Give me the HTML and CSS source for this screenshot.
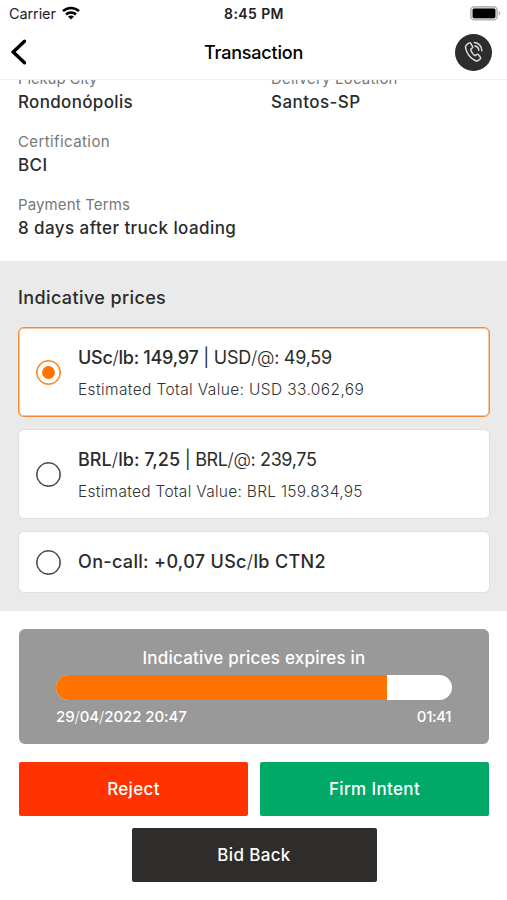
FILE: index.html
```html
<!DOCTYPE html>
<html lang="en">
<head>
  <meta charset="UTF-8" />
  <meta name="viewport" content="width=device-width, initial-scale=1.0"/>
  <title>Transaction</title>
  <link rel="stylesheet" href="styles.css">
</head>
<body>
  <div class="status-bar">
    <div class="carrier">
      <span>Carrier</span>
      <svg width="18" height="14" viewBox="0 0 18 14" fill="none" stroke="#000" stroke-width="2.5">
        <path d="M1 5.2C5.4.9 12.6.9 17 5.2"/>
        <path d="M4 8.5c2.8-2.7 7.2-2.7 10 0"/>
        <path d="M9 13.4L6 10.5c1.7-1.5 4.3-1.5 6 0z" fill="#000" stroke="none"/>
      </svg>
    </div>
    <span class="clock">8:45 PM</span>
    <svg class="battery" width="31" height="15" viewBox="0 0 31 15">
      <rect x=".75" y=".75" width="26.5" height="13" rx="3.6" fill="#ddd" stroke="#b5b5b5" stroke-width="1.5"/>
      <rect x="2.6" y="2.4" width="22.8" height="9.8" rx="1.8" fill="#000"/>
      <path d="M28.8 5v4.6c1.8-.7 1.8-3.9 0-4.6z" fill="#aaa"/>
    </svg>
  </div>

  <div class="header">
    <button class="back" aria-label="Back">
      <svg width="18" height="28" viewBox="0 0 18 28" fill="none" stroke="#000" stroke-width="3.4" stroke-linecap="round" stroke-linejoin="miter">
        <path d="M14.5 3.2L3.2 14l11.3 10.8"/>
      </svg>
    </button>
    <h1>Transaction</h1>
    <button class="call" aria-label="Call">
      <svg width="20" height="22" viewBox="0 0 20 22" fill="none" stroke="#ddd" stroke-width="1.5" stroke-linecap="round" stroke-linejoin="round">
        <path d="M3.1 3.3L5 2c.6-.4 1.3-.2 1.7.4L8.5 5.3c.4.6.2 1.3-.3 1.7l-1 .8c-.5.4-.6.9-.4 1.5.8 2 1.9 3.6 3.4 4.9.5.4 1.1.4 1.6 0l.9-.7c.6-.4 1.3-.3 1.7.2l2 2.6c.4.6.3 1.3-.2 1.7l-1.5 1.2c-1 .8-2.3.9-3.5.3C6.3 17.1 2.9 12.6 1.6 7.1 1.3 5.6 1.9 4.2 3.1 3.3z"/>
        <path d="M10.3 1.400c4.200.3 7.500 3.800 7.600 8.300"/>
        <path d="M10.900 5c2.300.4 3.700 2 3.900 4.300"/>
      </svg>
    </button>
  </div>

  <div class="content">
    <div class="details">
      <div class="field">
        <div class="label pickup">Pickup City</div>
        <div class="value city">Rondonópolis</div>
      </div>
      <div class="field">
        <div class="label">Delivery Location</div>
        <div class="value">Santos-SP</div>
      </div>
      <div class="field wide">
        <div class="label cert">Certification</div>
        <div class="value">BCI</div>
      </div>
      <div class="field wide">
        <div class="label terms">Payment Terms</div>
        <div class="value">8 days after truck loading</div>
      </div>
    </div>

    <div class="prices">
      <h2>Indicative prices</h2>
      <div class="option selected">
        <span class="radio"></span>
        <div class="option-text">
          <div class="price"><b>USc<i>/</i>lb: 149,97</b> | USD<i>/@</i>: 49,59</div>
          <div class="total">Estimated Total Value: USD 33.062,69</div>
        </div>
      </div>
      <div class="option">
        <span class="radio"></span>
        <div class="option-text">
          <div class="price brl"><b>BRL<i>/</i>lb: 7,25</b> | BRL<i>/@</i>: 239,75</div>
          <div class="total total-brl">Estimated Total Value: BRL 159.834,95</div>
        </div>
      </div>
      <div class="option short">
        <span class="radio"></span>
        <div class="price oncall"><b>On-call: +0,07 USc<i>/</i>lb CTN2</b></div>
      </div>
    </div>

    <div class="expires">
      <div class="expires-title">Indicative prices expires in</div>
      <div class="bar"><div class="bar-fill" style="width: 83.6%"></div></div>
      <div class="times">
        <span>29<i>/</i>04<i>/</i>2022 20:47</span>
        <span class="left">01:41</span>
      </div>
    </div>

    <div class="actions">
      <button class="btn reject">Reject</button>
      <button class="btn firm">Firm Intent</button>
      <button class="btn bid">Bid Back</button>
    </div>
  </div>
</body>
</html>
```
FILE: styles.css
```css
:root {
  --orange: #ff7300;
  --dark: #2e2d2b;
  --text: #2b2b2b;
  --muted: #777;
  --grey: #eaeaea;
}

* {
  box-sizing: border-box;
  margin: 0;
  padding: 0;
}

body {
  font-family: Inter, "Liberation Sans", sans-serif;
  background: #fff;
  color: var(--text);
  height: 900px;
  overflow: hidden;
  display: flex;
  flex-direction: column;
}

button {
  border: none;
  background: none;
  font-family: inherit;
}

i {
  font-style: normal;
  font-weight: 300;
}

/* Status bar */
.status-bar {
  height: 27px;
  padding: 0 6px 0 9px;
  display: grid;
  grid-template-columns: 1fr auto 1fr;
  align-items: center;
  font-size: 14.5px;
  color: #222;
}

.carrier {
  display: flex;
  align-items: center;
  gap: 6px;
  letter-spacing: -0.1px;
}

.carrier svg {
  margin-top: -2px;
}

.clock {
  font-weight: 600;
  font-size: 14px;
  letter-spacing: 0.4px;
  padding-right: 2px;
}

.battery {
  justify-self: end;
}

/* Header */
.header {
  height: 53px;
  padding: 0 15px 2px 10px;
  display: grid;
  grid-template-columns: 1fr auto 1fr;
  align-items: center;
  border-bottom: 1px solid #f0f0f0;
}

.back {
  justify-self: start;
  height: 28px;
}

h1 {
  font-size: 18px;
  font-weight: 500;
  letter-spacing: -0.2px;
  color: #000;
  padding-left: 5px;
}

.call {
  justify-self: end;
  width: 37px;
  height: 37px;
  border-radius: 50%;
  background: var(--dark);
  display: flex;
  align-items: center;
  justify-content: center;
}

/* Scrolled content */
.content {
  flex: 1;
  overflow: hidden;
}

.details {
  margin-top: -13px;
  padding: 0 18px;
  height: 194px;
  display: grid;
  grid-template-columns: 253px 1fr;
  grid-auto-rows: 46px;
  row-gap: 17px;
}

.wide {
  grid-column: span 2;
}

.label {
  font-size: 15px;
  line-height: 23px;
  letter-spacing: 0.2px;
  color: var(--muted);
}

.label.pickup {
  letter-spacing: -0.1px;
}

.label.cert {
  letter-spacing: 0.4px;
}

.label.terms {
  letter-spacing: 0.13px;
}

.value {
  font-size: 17px;
  line-height: 24px;
  font-weight: 500;
  letter-spacing: 0.43px;
}

.value.city {
  letter-spacing: 0.33px;
}

/* Price options */
.prices {
  background: var(--grey);
  height: 350px;
  padding: 25px 17px 0 18px;
}

h2 {
  font-size: 18px;
  line-height: 24px;
  font-weight: 500;
  letter-spacing: 0.38px;
  margin-bottom: 17px;
}

.option {
  display: flex;
  align-items: center;
  gap: 17px;
  height: 90px;
  margin-bottom: 12px;
  padding-left: 17px;
  background: #fff;
  border: 1px solid #e0e0e0;
  border-radius: 6px;
}

.option.selected {
  border-color: #f4893a;
  box-shadow: inset 0 0 0 0.5px #f4893a;
}

.option.short {
  height: 62px;
}

.option-text {
  padding-top: 3px;
}

.radio {
  width: 25px;
  height: 25px;
  border: 1px solid #333;
  box-shadow: inset 0 0 0 0.6px #333;
  border-radius: 50%;
  display: flex;
  align-items: center;
  justify-content: center;
}

.selected .radio {
  border-color: var(--orange);
  box-shadow: inset 0 0 0 0.6px var(--orange);
}

.selected .radio::after {
  content: "";
  width: 13px;
  height: 13px;
  border-radius: 50%;
  background: var(--orange);
}

.price {
  font-size: 18px;
  line-height: 32px;
  letter-spacing: -0.27px;
  white-space: nowrap;
}

.price b {
  font-weight: 500;
}

.price.brl {
  letter-spacing: -0.38px;
}

.price.brl b {
  letter-spacing: 0.05px;
}

.price.oncall {
  letter-spacing: 0.33px;
}

.total {
  font-size: 15.5px;
  line-height: 31px;
  font-weight: 300;
  letter-spacing: 0.38px;
  color: #333;
  white-space: nowrap;
}

.total.total-brl {
  letter-spacing: 0.28px;
}

/* Countdown */
.expires {
  margin: 18px 18px 0 19px;
  height: 115px;
  padding: 18px 37px 0;
  background: #999;
  border-radius: 6px;
  color: #fff;
}

.expires-title {
  text-align: center;
  font-size: 17px;
  line-height: 22px;
  font-weight: 500;
  letter-spacing: 0.23px;
}

.bar {
  margin-top: 6px;
  height: 25px;
  border-radius: 13px;
  background: #fff;
  overflow: hidden;
}

.bar-fill {
  height: 100%;
  background: var(--orange);
}

.times {
  display: flex;
  justify-content: space-between;
  font-size: 15px;
  line-height: 20px;
  font-weight: 500;
  letter-spacing: -0.08px;
  margin-top: 7px;
}

.times .left {
  letter-spacing: -0.4px;
  padding-right: 1px;
}

/* Buttons */
.actions {
  margin: 18px 18px 0 19px;
  display: grid;
  grid-template-columns: 1fr 1fr;
  gap: 12px;
}

.btn {
  height: 54px;
  border-radius: 2px;
  color: #fff;
  font-size: 17px;
  font-weight: 500;
  letter-spacing: 0.35px;
}

.reject {
  background: #ff3300;
}

.firm {
  background: #00a968;
}

.bid {
  grid-column: span 2;
  justify-self: center;
  width: 245px;
  background: var(--dark);
}
```
